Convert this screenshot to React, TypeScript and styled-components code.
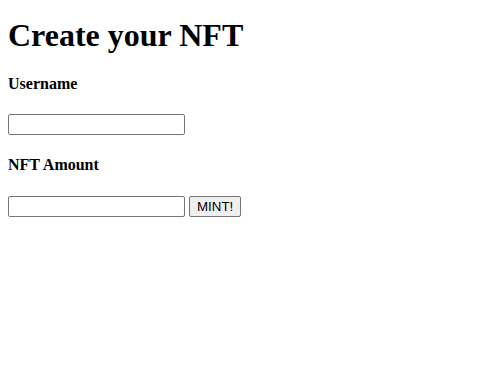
import styled, { createGlobalStyle } from 'styled-components';

const GlobalStyle = createGlobalStyle`
  body {
    margin: 0;
    padding: 8px;
    font-family: "Liberation Serif", "Times New Roman", serif;
    color: #000;
    background: #fff;
  }
`;

const Title = styled.h1`
  font-size: 2em;
  font-weight: 700;
  margin: 8.5px 0 0.67em;
`;

const Label = styled.h4`
  font-size: 1em;
  font-weight: 700;
  margin: 1.33em 0;
`;

const Row = styled.div`
  display: flex;
  align-items: center;
  gap: 4px;
`;

const Field = styled.input`
  display: block;
  font-family: "Liberation Sans", Arial, sans-serif;
  font-size: 13.33px;
  width: 177px;
  height: 21px;
  box-sizing: border-box;
  padding: 1px 2px;
  border: 1px solid #767676;
  border-radius: 2px;
  background: #fff;
`;

const MintButton = styled.button`
  font-family: "Liberation Sans", Arial, sans-serif;
  font-size: 13.33px;
  height: 21px;
  box-sizing: border-box;
  padding: 1px 7px;
  border: 1px solid #767676;
  border-radius: 2px;
  background: #efefef;
  color: #000;
  line-height: 1;
`;

function App() {
  return (
    <>
      <GlobalStyle />
      <Title>Create your NFT</Title>
      <Label>Username</Label>
      <Field type="text" />
      <Label>NFT Amount</Label>
      <Row>
        <Field type="number" />
        <MintButton>MINT!</MintButton>
      </Row>
    </>
  );
}

export default App;
